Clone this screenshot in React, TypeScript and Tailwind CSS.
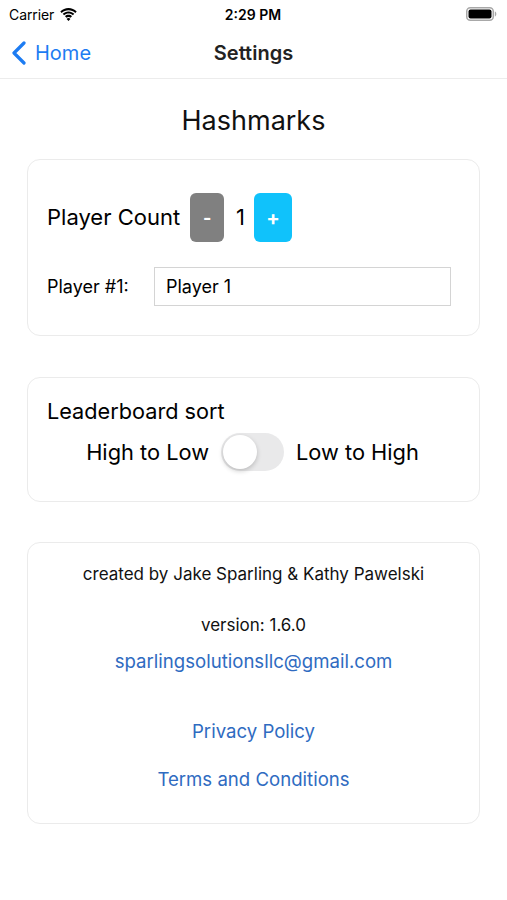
import React, { useState } from "react";

const font = { fontFamily: "Inter, 'Noto Sans', sans-serif" };

const Wifi = () => (
	<svg width="17" height="13" viewBox="0 0 17 13">
		<path d="M8.5 2.2c2.6 0 5 1 6.8 2.7l1.4-1.5C14.5 1.3 11.6 0 8.5 0S2.5 1.3.3 3.4l1.4 1.5C3.5 3.2 5.9 2.2 8.5 2.2z" fill="#000" />
		<path d="M8.5 5.6c1.7 0 3.2.6 4.4 1.7l1.4-1.5C12.8 4.3 10.8 3.4 8.5 3.4S4.2 4.3 2.7 5.8l1.4 1.5c1.2-1.1 2.7-1.7 4.4-1.7z" fill="#000" />
		<path d="M8.5 9c.8 0 1.5.3 2 .8L12 8.2C11.1 7.3 9.9 6.8 8.5 6.8S5.9 7.3 5 8.2l1.5 1.6c.5-.5 1.2-.8 2-.8zM8.5 13l1.9-2.1c-.5-.5-1.2-.8-1.9-.8s-1.4.3-1.9.8z" fill="#000" />
	</svg>
);

const Battery = () => (
	<svg width="31" height="14" viewBox="0 0 31 14">
		<rect x="0.75" y="0.75" width="26.5" height="12.5" rx="3.5" fill="none" stroke="#a8a8a8" strokeWidth="1.5" />
		<rect x="2.5" y="2.5" width="23" height="9" rx="2" fill="#000" />
		<path d="M28.8 4.5v5c.9-.3 1.5-1.2 1.5-2.5s-.6-2.2-1.5-2.5z" fill="#a8a8a8" />
	</svg>
);

const Card = ({ className, children }: { className: string; children: React.ReactNode }) => (
	<div className={`mx-[27px] rounded-[13px] border border-[#ebebeb] bg-white ${className}`}>{children}</div>
);

export default function App() {
	const [count, setCount] = useState(1);
	const [lowToHigh, setLowToHigh] = useState(false);

	return (
		<div className="h-[900px] w-[507px] bg-white text-black" style={font}>
			{/* status bar */}
			<div className="flex h-[27px] items-center px-[9px] pt-[1px] text-[14px]">
				<div className="flex flex-1 items-center gap-[6px]">
					<span className="tracking-[-0.1px]">Carrier</span>
					<Wifi />
				</div>
				<span className="font-semibold">2:29 PM</span>
				<div className="flex flex-1 justify-end pr-[1px]">
					<Battery />
				</div>
			</div>

			{/* nav bar */}
			<div className="relative flex h-[52px] items-center border-b border-[#ececec]">
				<button className="flex items-center gap-[8px] pl-[11px] text-[20px] text-[#1d7cf2]">
					<svg width="16" height="24" viewBox="0 0 16 24">
						<path d="M13 2 3 12l10 10" fill="none" stroke="#1d7cf2" strokeWidth="3.2" strokeLinecap="round" strokeLinejoin="round" />
					</svg>
					<span className="mt-[1px]">Home</span>
				</button>
				<div className="absolute left-1/2 -translate-x-1/2 text-[20px] font-semibold text-[#222]">Settings</div>
			</div>

			<h1 className="mt-[24px] text-center text-[27px] leading-[36px] text-[#111]">Hashmarks</h1>

			{/* players */}
			<Card className="mt-[20px] h-[177px] px-[19px] pt-[33px]">
				<div className="flex items-center">
					<span className="text-[22px]">Player Count</span>
					<button
						className="ml-[10px] flex h-[49px] w-[34px] items-center justify-center rounded-[6px] bg-[#808080] text-[18px] font-bold text-white"
						onClick={() => setCount(Math.max(1, count - 1))}
					>
						-
					</button>
					<span className="ml-[12px] mr-[9px] text-[22px]">{count}</span>
					<button
						className="flex h-[49px] w-[38px] items-center justify-center rounded-[6px] bg-[#10c2fb] text-[20px] font-bold text-white"
						onClick={() => setCount(count + 1)}
					>
						+
					</button>
				</div>
				<div className="mt-[25px] flex items-center">
					<span className="w-[107px] text-[18px]">Player #1:</span>
					<input
						defaultValue="Player 1"
						className="h-[39px] w-[297px] border border-[#d4d4d4] px-[11px] text-[18px] outline-none"
					/>
				</div>
			</Card>

			{/* sort */}
			<Card className="mt-[41px] h-[125px] px-[19px] pt-[20px]">
				<div className="text-[21.7px] leading-[26px]">Leaderboard sort</div>
				<div className="mt-[9px] flex items-center justify-center gap-[12px] pr-[2px] text-[21.8px]">
					<span>High to Low</span>
					<button
						onClick={() => setLowToHigh(!lowToHigh)}
						className={`relative h-[38px] w-[63px] rounded-full ${lowToHigh ? "bg-[#34c759]" : "bg-[#e9e9ea]"}`}
					>
						<span
							className={`absolute top-[2px] h-[34px] w-[34px] rounded-full bg-white shadow-[0_2px_5px_rgba(0,0,0,0.2)] ${lowToHigh ? "left-[27px]" : "left-[2px]"}`}
						/>
					</button>
					<span>Low to High</span>
				</div>
			</Card>

			{/* about */}
			<Card className="mt-[40px] flex h-[282px] flex-col items-center pt-[20px]">
				<div className="text-[17px] leading-[22px] text-[#111]">created by Jake Sparling &amp; Kathy Pawelski</div>
				<div className="mt-[29px] text-[17px] leading-[22px] text-[#111]">version: 1.6.0</div>
				<a className="mt-[13px] text-[18.6px] leading-[24px] text-[#2f6bc1]">sparlingsolutionsllc@gmail.com</a>
				<a className="mt-[46px] text-[18.6px] leading-[24px] text-[#2f6bc1]">Privacy Policy</a>
				<a className="mt-[24px] text-[18.6px] leading-[24px] text-[#2f6bc1]">Terms and Conditions</a>
			</Card>
		</div>
	);
}
